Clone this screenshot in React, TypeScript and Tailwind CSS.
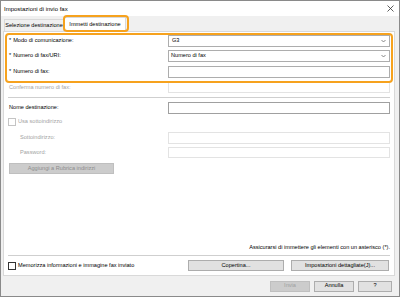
import React from "react";

const F = "font-['Liberation_Sans',Arial,sans-serif]";

function Chevron() {
  return (
    <svg width="5" height="4" viewBox="0 0 5 4" className="mr-[3px]">
      <path d="M0.5 1 L2.5 3 L4.5 1" fill="none" stroke="#6b6b6b" strokeWidth="0.8" />
    </svg>
  );
}

function Row({
  label,
  star,
  disabled,
  children,
  h = "h-[12px]",
  mt,
  indent,
}: {
  label: string;
  star?: boolean;
  disabled?: boolean;
  children: React.ReactNode;
  h?: string;
  mt: string;
  indent?: boolean;
}) {
  return (
    <div className={`flex items-center ${h} ${mt} pr-[4px] ${indent ? "pl-[16px]" : "pl-[5px]"}`}>
      <div className={`flex-1 leading-none whitespace-nowrap ${disabled ? "text-[#a3a3a3]" : "text-black"}`}>
        {star && <span className="mr-[2px]">*</span>}
        {label}
      </div>
      {children}
    </div>
  );
}

export default function App() {
  return (
    <div
      className={`${F} relative w-[400px] h-[297px] bg-[#f0f0f0] border border-[#8a8a8a] flex flex-col overflow-hidden text-[5.6px] text-black`}
    >
      {/* Title bar */}
      <div className="h-[15px] bg-white flex items-center justify-between pl-[3px] pr-[5px]">
        <span className="text-[6px] leading-none whitespace-nowrap">Impostazioni di invio fax</span>
        <svg width="7" height="7" viewBox="0 0 7 7">
          <path d="M0.5 0.5 L6.5 6.5 M6.5 0.5 L0.5 6.5" stroke="#333" strokeWidth="0.8" />
        </svg>
      </div>

      {/* Tabs */}
      <div className="relative h-[15px] flex items-end pl-[3px] z-10">
        <div className="h-[12px] w-[60px] border border-b-0 border-[#d9d9d9] bg-[#f0f0f0] flex items-center justify-center leading-none whitespace-nowrap">
          Selezione destinazione
        </div>
        <div className="h-[15px] w-[62px] border border-b-0 border-[#d9d9d9] bg-white flex items-center justify-center leading-none whitespace-nowrap mb-[-1px]">
          Immetti destinazione
        </div>
        <div className="absolute left-[62px] top-[-1px] w-[66px] h-[17px] rounded-[4px] border-2 border-[#f6a21e]" />
      </div>

      {/* Panel */}
      <div className="relative flex-1 ml-[2px] mr-[4px] bg-white border border-[#d9d9d9] flex flex-col">
        <div className="absolute left-[1px] top-[1px] right-[1px] h-[50px] rounded-[4px] border-2 border-[#f6a21e] pointer-events-none" />

        <Row label="Modo di comunicazione:" star mt="mt-[3px]">
          <div className="w-[222px] h-full border border-[#adadad] bg-white flex items-center justify-between pl-[3px] leading-none">
            <span>G3</span>
            <Chevron />
          </div>
        </Row>
        <Row label="Numero di fax/URI:" star mt="mt-[3px]">
          <div className="w-[222px] h-full border border-[#adadad] bg-white flex items-center justify-between pl-[2px] leading-none">
            <span>Numero di fax</span>
            <Chevron />
          </div>
        </Row>
        <Row label="Numero di fax:" star mt="mt-[4px]">
          <div className="w-[222px] h-full border border-[#adadad] bg-white" />
        </Row>
        <Row label="Conferma numero di fax:" disabled mt="mt-[4px]" h="h-[11px]">
          <div className="w-[222px] h-full border border-[#e3e3e3] bg-white" />
        </Row>

        <div className="mt-[4px] mx-[4px] h-px bg-[#cfcfcf]" />

        <Row label="Nome destinazione:" mt="mt-[4px]">
          <div className="w-[222px] h-full border border-[#a0a0a0] bg-white" />
        </Row>

        <div className="mt-[4px] h-[8px] flex items-center pl-[4px] text-[#a3a3a3] leading-none whitespace-nowrap">
          <div className="w-[8px] h-[8px] border border-[#c4c4c4] bg-white mr-[2px]" />
          Usa sottoindirizzo
        </div>

        <Row label="Sottoindirizzo:" disabled indent mt="mt-[6px]">
          <div className="w-[222px] h-full border border-[#e3e3e3] bg-white" />
        </Row>
        <Row label="Password:" disabled indent mt="mt-[3px]" h="h-[11px]">
          <div className="w-[222px] h-full border border-[#e3e3e3] bg-white" />
        </Row>

        <div className="mt-[5px] ml-[5px] w-[105px] h-[11px] bg-[#cccccc] border border-[#bfbfbf] flex items-center justify-center leading-none text-[#8d8d8d] whitespace-nowrap">
          Aggiungi a Rubrica indirizzi
        </div>

        <div className="flex-1" />

        <div className="h-[8px] flex items-center justify-end pr-[4px] leading-none whitespace-nowrap">
          Assicurarsi di immettere gli elementi con un asterisco (*).
        </div>
        <div className="mt-[3px] mx-[4px] h-px bg-[#cfcfcf]" />
        <div className="mt-[4px] mb-[4px] h-[11px] flex items-center pl-[4px] pr-[5px] leading-none whitespace-nowrap">
          <div className="w-[8px] h-[8px] border border-[#333] bg-white mr-[2px]" />
          <span className="flex-1">Memorizza informazioni e immagine fax inviato</span>
          <div className="w-[96px] h-full bg-[#e1e1e1] border border-[#adadad] flex items-center justify-center">
            Copertina...
          </div>
          <div className="w-[98px] h-full ml-[7px] bg-[#e1e1e1] border border-[#adadad] flex items-center justify-center">
            Impostazioni dettagliate(J)...
          </div>
        </div>
      </div>

      {/* Footer */}
      <div className="h-[20px] flex items-center justify-end pr-[7px] gap-[4px] leading-none">
        <div className="w-[40px] h-[11px] bg-[#cccccc] border border-[#bfbfbf] text-[#a0a0a0] flex items-center justify-center">
          Invia
        </div>
        <div className="w-[40px] h-[11px] bg-[#e1e1e1] border border-[#adadad] flex items-center justify-center">
          Annulla
        </div>
        <div className="w-[34px] h-[11px] bg-[#e1e1e1] border border-[#adadad] flex items-center justify-center">
          ?
        </div>
      </div>
    </div>
  );
}
